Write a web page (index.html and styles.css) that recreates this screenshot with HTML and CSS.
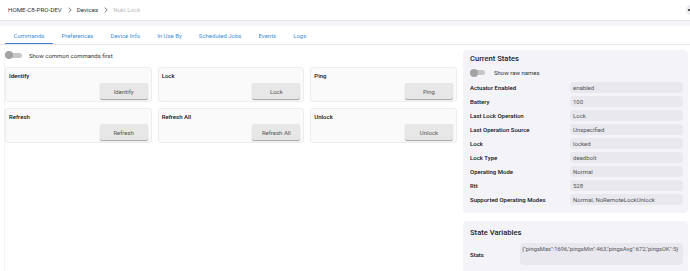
FILE: index.html
```html
<!DOCTYPE html>
<html lang="en">
  <head>
    <meta charset="UTF-8" />
    <title>Nuki Lock</title>
    <link rel="stylesheet" href="styles.css">
  </head>
  <body>
    <!-- Breadcrumb header -->
    <div class="topbar">
      <span class="crumb">HOME-C8-PRO-DEV</span>
      <svg class="sep" width="4" height="6" viewBox="0 0 4 6"><path d="M0.8 0.6 L3.2 3 L0.8 5.4" fill="none" stroke="#555" stroke-width="0.8"/></svg>
      <span class="crumb">Devices</span>
      <svg class="sep" width="4" height="6" viewBox="0 0 4 6"><path d="M0.8 0.6 L3.2 3 L0.8 5.4" fill="none" stroke="#555" stroke-width="0.8"/></svg>
      <span class="crumb current">Nuki Lock</span>
      <span class="avatar"><span></span></span>
    </div>
    <div class="band"></div>

    <!-- Tabs -->
    <div class="tabs">
      <a class="tab active">Commands</a>
      <a class="tab">Preferences</a>
      <a class="tab">Device Info</a>
      <a class="tab">In Use By</a>
      <a class="tab">Scheduled Jobs</a>
      <a class="tab">Events</a>
      <a class="tab">Logs</a>
    </div>

    <div class="main">
      <div class="left">
        <label class="switch-row">
          <span class="switch"></span>
          <span>Show common commands first</span>
        </label>
        <div class="commands">
          <div class="command"><div class="cmd-title">Identify</div><button>Identify</button></div>
          <div class="command"><div class="cmd-title">Lock</div><button>Lock</button></div>
          <div class="command"><div class="cmd-title">Ping</div><button>Ping</button></div>
          <div class="command"><div class="cmd-title">Refresh</div><button>Refresh</button></div>
          <div class="command"><div class="cmd-title">Refresh All</div><button>Refresh All</button></div>
          <div class="command"><div class="cmd-title">Unlock</div><button>Unlock</button></div>
        </div>
      </div>

      <div class="right">
        <div class="panel">
          <h2>Current States</h2>
          <label class="switch-row small">
            <span class="switch"></span>
            <span>Show raw names</span>
          </label>
          <div class="state"><span class="name">Actuator Enabled</span><span class="value">enabled</span></div>
          <div class="state"><span class="name">Battery</span><span class="value">100</span></div>
          <div class="state"><span class="name">Last Lock Operation</span><span class="value">Lock</span></div>
          <div class="state"><span class="name">Last Operation Source</span><span class="value">Unspecified</span></div>
          <div class="state"><span class="name">Lock</span><span class="value">locked</span></div>
          <div class="state"><span class="name">Lock Type</span><span class="value">deadbolt</span></div>
          <div class="state"><span class="name">Operating Mode</span><span class="value">Normal</span></div>
          <div class="state"><span class="name">Rtt</span><span class="value">528</span></div>
          <div class="state"><span class="name">Supported Operating Modes</span><span class="value">Normal, NoRemoteLockUnlock</span></div>
        </div>

        <div class="panel vars">
          <h2>State Variables</h2>
          <div class="state var">
            <span class="name">Stats</span>
            <span class="value">{"pingsMax":1696,"pingsMin":463,"pingsAvg":672,"pingsOK":5}</span>
          </div>
        </div>
      </div>
    </div>
  </body>
</html>
```

FILE: styles.css
```css
body {
  margin: 0;
  font-family: Roboto, "Liberation Sans", sans-serif;
  font-size: 6px;
  color: #222;
  background: #fff;
  overflow: hidden;
}

.topbar {
  height: 20px;
  display: flex;
  align-items: center;
  padding-left: 8px;
  border-bottom: 1px solid #e8e8ef;
  overflow: hidden;
  font-size: 6.2px;
}

.crumb {
  color: #333;
}

.crumb.current {
  color: #bbb;
}

.sep {
  margin: 0 5px 0 6px;
}

.avatar {
  margin-left: auto;
  margin-right: -6px;
  width: 10px;
  height: 10px;
  border-radius: 50%;
  background: #ececf0;
  display: flex;
  align-items: center;
  padding-left: 2px;
  box-sizing: border-box;
}

.avatar span {
  width: 1.5px;
  height: 1.5px;
  background: #555;
}

.band {
  height: 5px;
  background: #f4f4f9;
}

.tabs {
  display: flex;
  height: 18px;
  padding-left: 5px;
  border-bottom: 1px solid #e6e6ec;
}

.tab {
  color: #3f8fd8;
  font-size: 6px;
  padding: 1px 8.5px 0;
  display: flex;
  align-items: center;
  border-bottom: 1px solid transparent;
}

.tab.active {
  border-bottom: 1px solid #3f7fd0;
}

.main {
  display: flex;
  gap: 6px;
  padding: 3px 2px 0 4px;
  height: 223px;
  overflow: hidden;
}

.left {
  width: 452px;
  border-left: 1px solid #f3f3f3;
}

.right {
  flex: 1;
  display: flex;
  flex-direction: column;
  gap: 8px;
  margin-top: 2px;
}

.switch-row {
  display: flex;
  align-items: center;
  gap: 7px;
  height: 14px;
  margin-bottom: 5px;
  color: #333;
}

.switch {
  position: relative;
  width: 17px;
  height: 8px;
}

.switch::before {
  content: "";
  position: absolute;
  left: 2px;
  right: 0;
  top: 1.5px;
  height: 5px;
  border-radius: 3px;
  background: #c6c6c6;
}

.switch::after {
  content: "";
  position: absolute;
  left: 0;
  top: 0;
  width: 8px;
  height: 8px;
  border-radius: 50%;
  background: #a3a3a3;
}

.commands {
  display: grid;
  grid-template-columns: repeat(3, 1fr);
  gap: 6px;
}

.command {
  height: 35px;
  box-sizing: border-box;
  background: #fafafa;
  border: 1px solid #ededed;
  border-radius: 3px;
  padding: 4px 3px 0 3px;
  display: flex;
  flex-direction: column;
}

.cmd-title {
  font-weight: 500;
  color: #111;
  height: 11px;
}

.command button {
  align-self: flex-end;
  width: 48px;
  height: 16px;
  border: none;
  border-radius: 2px;
  background: #e7e7e7;
  box-shadow: 0 1px 1px rgba(0, 0, 0, 0.35);
  font-family: inherit;
  font-size: 6px;
  color: #555;
  padding: 0;
}

.panel {
  background: #f4f4f8;
  border-radius: 4px;
  padding: 3px 5px 5px 7px;
}

.panel h2 {
  margin: 0;
  font-size: 7.6px;
  font-weight: 500;
  color: #222;
  height: 12px;
  line-height: 12px;
}

.switch-row.small {
  gap: 9px;
  margin: 1px 0 3px;
  height: 13px;
}

.switch-row.small .switch {
  width: 15px;
}

.state {
  display: flex;
  align-items: center;
  height: 11px;
  margin-bottom: 3px;
}

.state .name {
  width: 100px;
  font-weight: 500;
  color: #111;
}

.state .value {
  flex: 1;
  height: 11px;
  line-height: 11px;
  background: #e8e8ee;
  border-radius: 4px;
  padding-left: 3px;
  color: #555;
}

.vars h2 {
  margin: 3px 0 4px;
}

.state.var {
  height: 22px;
}

.state.var .name {
  width: 50px;
}

.state.var .value {
  height: 22px;
  line-height: 10px;
  padding: 1px 4.8px 0 2px;
  box-sizing: border-box;
  font-size: 5.8px;
  word-break: break-all;
}
```
